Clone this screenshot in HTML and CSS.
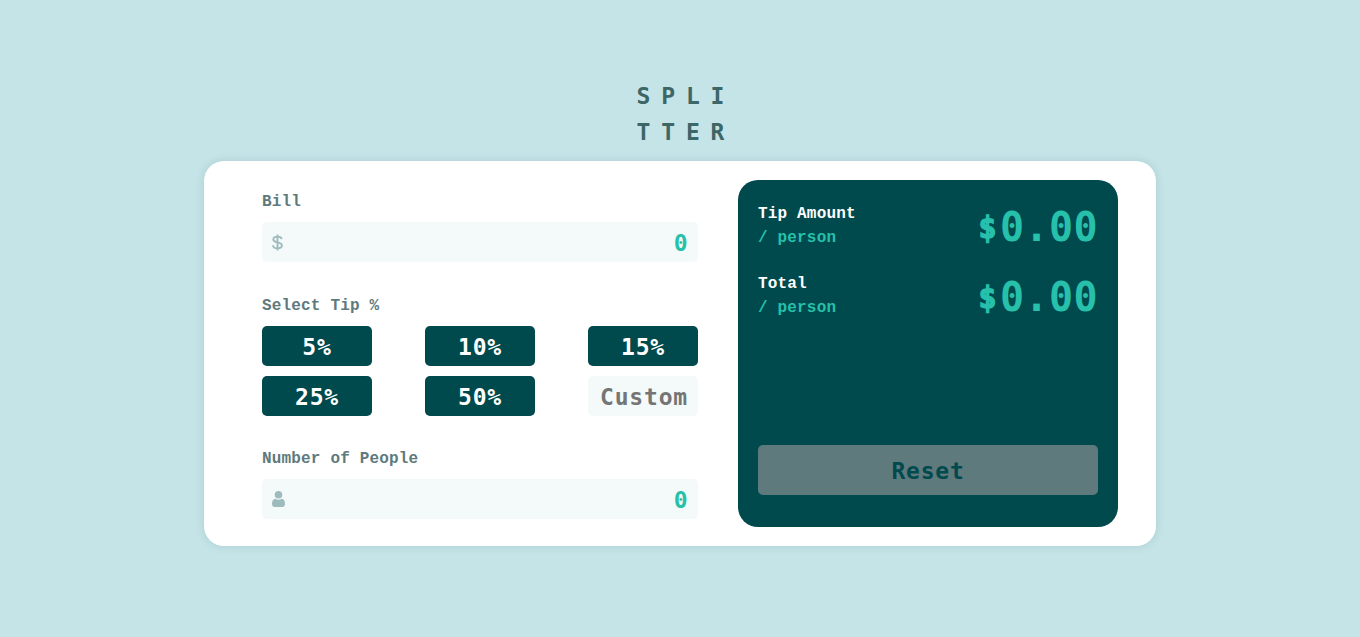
FILE: index.html
```html
<!DOCTYPE html>
<html lang="en">
<head>
<meta charset="utf-8">
<title>Splitter</title>
<link rel="stylesheet" href="styles.css">
</head>
<body>
<h1 class="logo">SPLI<br>TTER</h1>
<main class="card">
  <form class="form">
    <label class="label">Bill</label>
    <div class="field">
      <svg class="dollar" width="11" height="17" viewBox="0 0 11 17"><path d="M5.500 .5v16M9.700 5.200C9.500 3.500 8 2.600 5.500 2.600S1.300 3.600 1.300 5.400c0 4 8.600 1.800 8.600 5.900 0 2-1.700 3.100-4.400 3.100S1.100 13.200 1 11.200" fill="none" stroke="#9ebbbd" stroke-width="1.900"/></svg>
      <span class="value">0</span>
    </div>
    <div class="label label-tip">Select Tip %</div>
    <div class="tips">
      <button type="button" class="tip">5%</button>
      <button type="button" class="tip">10%</button>
      <button type="button" class="tip">15%</button>
      <button type="button" class="tip">25%</button>
      <button type="button" class="tip">50%</button>
      <div class="tip custom">Custom</div>
    </div>
    <label class="label label-people">Number of People</label>
    <div class="field">
      <svg class="person" width="13" height="16" viewBox="0 0 13 16"><path fill="#9ebbbd" d="M9.600 7.700C11.900 7.900 13 9.700 13 12.800 13 14.800 12.100 16 10.600 16H2.400C.9 16 0 14.800 0 12.800 0 9.700 1.100 7.900 3.400 7.700c.8.700 1.900 1.100 3.100 1.100s2.300-.4 3.100-1.100zM6.500 0a3.800 3.800 0 1 1 0 7.600 3.800 3.800 0 0 1 0-7.600z"/></svg>
      <span class="value">0</span>
    </div>
  </form>
  <section class="panel">
    <div class="result">
      <div class="caption">Tip Amount<span class="per">/ person</span></div>
      <div class="amount"><span class="currency">$</span>0.00</div>
    </div>
    <div class="result">
      <div class="caption">Total<span class="per">/ person</span></div>
      <div class="amount"><span class="currency">$</span>0.00</div>
    </div>
    <button type="button" class="reset">Reset</button>
  </section>
</main>
</body>
</html>
```
FILE: styles.css
```css
* { box-sizing: border-box; }
body {
  margin: 0;
  min-height: 637px;
  padding-top: 78px;
  background: #c5e4e7;
  font-family: "DejaVu Sans Mono", monospace;
  font-weight: 700;
  line-height: 24px;
}
.logo {
  margin: 0 auto 11px;
  width: 87px;
  font-size: 23px;
  line-height: 36px;
  letter-spacing: 10.850px;
  color: #3d6666;
  white-space: nowrap;
}
.card {
  display: flex;
  justify-content: space-between;
  width: 952px;
  height: 385px;
  margin: 0 auto;
  padding: 19px 38px 19px 58px;
  border-radius: 20px;
  background: #fff;
  box-shadow: 0 0 10px rgba(0, 73, 77, .14);
}
.form { width: 436px; padding-top: 9px; }
.label, .caption {
  font-family: "Liberation Mono", "Courier New", monospace;
  font-size: 16px;
  letter-spacing: .17px;
}
.label { display: block; height: 33px; padding-top: 1px; color: #5e7a7d; }
.label-tip { margin-top: 31px; }
.label-people { margin-top: 30px; }
.field {
  display: flex;
  align-items: center;
  justify-content: space-between;
  height: 40px;
  padding: 0 10px;
  border-radius: 5px;
  background: #f4fafa;
}
.value {
  padding-top: 1px;
  font-size: 23px;
  line-height: 40px;
  letter-spacing: .5px;
  color: #26c0ab;
}
.tips {
  display: grid;
  grid-template-columns: repeat(3, 110px);
  justify-content: space-between;
  row-gap: 10px;
}
.tip {
  height: 40px;
  padding: 2px 0 0;
  border: 0;
  border-radius: 5px;
  background: #00494d;
  color: #fff;
  font: inherit;
  font-size: 23px;
  line-height: 38px;
  letter-spacing: .8px;
  text-align: center;
}
.custom { padding-left: 2px; background: #f4fafa; color: #757575; }
.panel {
  display: flex;
  flex-direction: column;
  width: 380px;
  height: 347px;
  padding: 12px 20px 32px;
  border-radius: 20px;
  background: #00494d;
}
.result { display: flex; justify-content: space-between; height: 70px; }
.caption { padding-top: 10px; color: #fff; }
.per { display: block; color: #26c0ab; }
.amount {
  font-size: 40px;
  line-height: 70px;
  letter-spacing: .4px;
  color: #26c0ab;
}
.currency {
  display: inline-block;
  width: 24.500px;
  font-size: 30px;
  line-height: 40px;
  text-align: center;
  vertical-align: 3px;
  -webkit-text-stroke: 1.300px #26c0ab;
}
.reset {
  height: 50px;
  margin-top: auto;
  padding: 2px 0 0;
  border: 0;
  border-radius: 5px;
  background: #5e7a7d;
  color: #00494d;
  font: inherit;
  font-size: 23px;
  letter-spacing: .8px;
}
```
